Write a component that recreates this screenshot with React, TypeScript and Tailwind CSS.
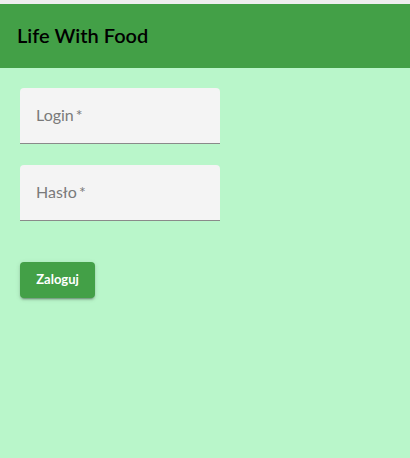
import React from "react";

export default function App() {
  return (
    <div
      className="w-[410px] h-[458px] bg-[#b9f6ca] flex flex-col"
      style={{ fontFamily: "Lato, 'Noto Sans', sans-serif" }}
    >
      <div className="h-[4px] bg-[#eeeeee]" />
      <header className="h-[64px] bg-[#43a047] flex items-center pl-[17px] pb-[2px]">
        <h1 className="text-[20px] font-semibold text-black leading-none">Life With Food</h1>
      </header>
      <div className="flex flex-col pl-[20px] pt-[20px]">
        <div className="w-[200px] h-[56px] bg-[#f4f4f4] rounded-t-[4px] border-b border-[#8a8a8a] flex items-center pl-[16px] pb-[1px]">
          <span className="text-[16px] text-[#7a7a7a]">Login{"\u2009"}*</span>
        </div>
        <div className="mt-[21px] w-[200px] h-[56px] bg-[#f4f4f4] rounded-t-[4px] border-b border-[#8a8a8a] flex items-center pl-[16px] pb-[1px]">
          <span className="text-[16px] text-[#7a7a7a]">Hasło{"\u2009"}*</span>
        </div>
        <button className="mt-[41px] w-[75px] h-[36px] bg-[#43a047] rounded-[4px] text-white text-[13px] font-bold shadow-[0_3px_1px_-2px_rgba(0,0,0,0.2),0_2px_2px_0_rgba(0,0,0,0.14),0_1px_5px_0_rgba(0,0,0,0.12)]">
          Zaloguj
        </button>
      </div>
    </div>
  );
}
